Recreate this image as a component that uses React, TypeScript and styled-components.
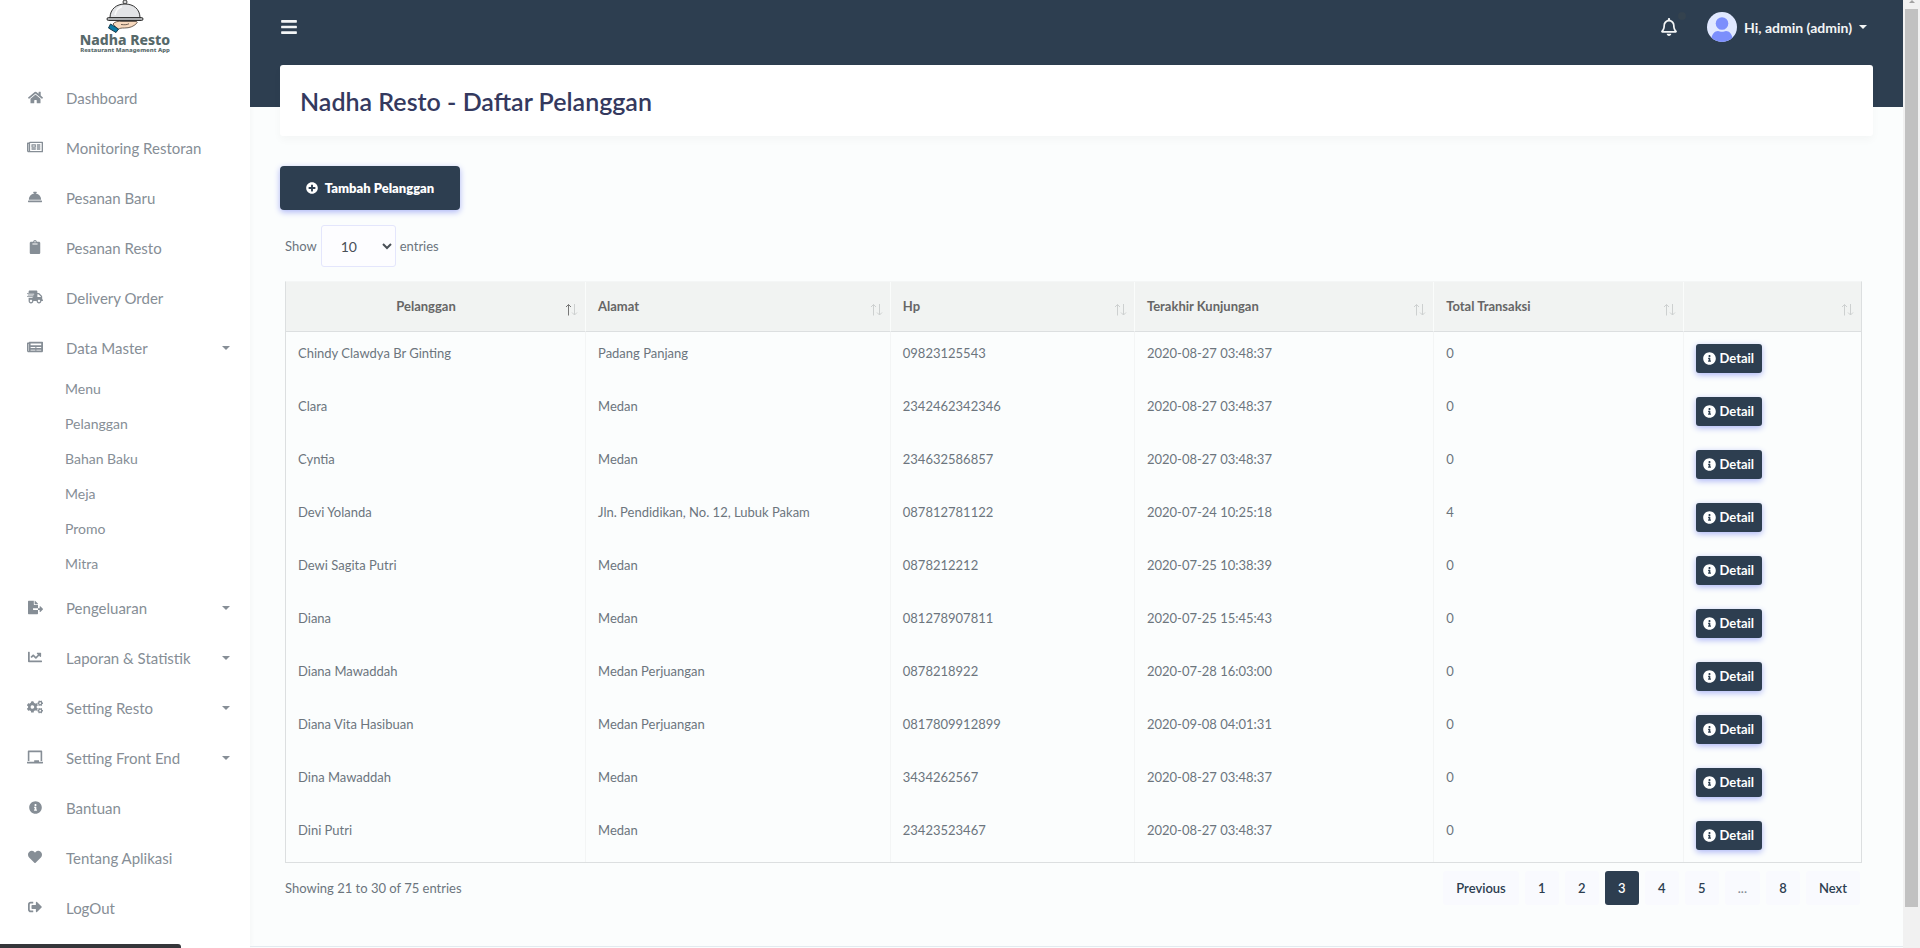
import React from "react";
import styled, { createGlobalStyle } from "styled-components";
import type { IconType } from "react-icons";
import {
  FaBars,
  FaChalkboard,
  FaChartLine,
  FaClipboard,
  FaCogs,
  FaConciergeBell,
  FaFileExport,
  FaHeart,
  FaHome,
  FaInfoCircle,
  FaNewspaper,
  FaPlusCircle,
  FaRegBell,
  FaRegNewspaper,
  FaShippingFast,
  FaSignOutAlt,
} from "react-icons/fa";

const navy = "#2d3e50";
const grey = "#868e96";

const GlobalStyle = createGlobalStyle`
  * { box-sizing: border-box; }
  body {
    margin: 0;
    background: #fbfdfd;
    color: #6c757d;
    font-family: Lato, "Open Sans", "Liberation Sans", sans-serif;
    font-size: 13px;
    line-height: 18px;
  }
  button, select { font-family: inherit; }
  a { color: inherit; text-decoration: none; }
`;

const Page = styled.div`
  display: grid;
  grid-template-columns: 250px minmax(0, 1fr) 17px;
  height: 100vh;
  overflow: hidden;
`;

/* Sidebar */
const Sidebar = styled.aside`
  background: #fff;
  box-shadow: 0 0 6px rgba(0, 0, 0, 0.04);
  overflow: hidden;
`;

const Brand = styled.a`
  display: flex;
  flex-direction: column;
  align-items: center;
  height: 73px;
  color: #57696a;
  font-family: "Noto Sans", "Open Sans", sans-serif;
  font-weight: 800;
`;

const BrandName = styled.span`
  font-size: 14px;
  line-height: 13px;
`;

const BrandTagline = styled.span`
  font-size: 6px;
  line-height: 8px;
`;

const Menu = styled.ul`
  margin: 0;
  padding: 0;
  list-style: none;
`;

const MenuLink = styled.a`
  display: flex;
  align-items: center;
  height: 50px;
  padding: 0 20px 0 25px;
  color: ${grey};
  font-size: 15px;
`;

const MenuIcon = styled.span`
  display: flex;
  justify-content: center;
  width: 20px;
  margin-right: 21px;
  padding-bottom: 2px;
`;

const MenuLabel = styled.span`
  flex: 1;
`;

const Caret = styled.span`
  border: 4px solid transparent;
  border-top-color: currentColor;
  border-bottom: 0;
`;

const SubMenu = styled(Menu)`
  padding: 0 0 0 65px;
`;

const SubLink = styled.a`
  display: flex;
  align-items: center;
  height: 35px;
  padding-bottom: 3px;
  color: ${grey};
  font-size: 14px;
`;

/* Main column */
const Main = styled.main`
  display: flex;
  flex-direction: column;
  min-width: 0;
`;

const Topbar = styled.header`
  display: flex;
  align-items: flex-start;
  height: 65px;
  padding: 12px 36px 0 30px;
  background: ${navy};
  color: #fff;
`;

const IconButton = styled.button`
  display: flex;
  align-items: center;
  height: 30px;
  padding: 0;
  border: 0;
  background: none;
  color: #f3f5f6;
`;

const BellButton = styled(IconButton)`
  position: relative;
  margin-left: auto;
`;

const BellDot = styled.span`
  position: absolute;
  top: 0;
  right: -8px;
  width: 8px;
  height: 8px;
  border-radius: 50%;
  background: #34424e;
`;

const UserButton = styled(IconButton)`
  gap: 7px;
  margin-left: 29px;
  font-size: 14px;
  font-weight: 700;
`;

const Content = styled.div`
  flex: 1;
  padding: 0 30px;
  background: linear-gradient(${navy} 42px, transparent 42px);
`;

const TitleCard = styled.section`
  padding: 24px 20px 22px;
  border-radius: 3px;
  background: #fff;
  box-shadow: 0 4px 8px rgba(0, 0, 0, 0.03);
`;

const Title = styled.h1`
  margin: 0;
  color: #34395e;
  font-size: 25px;
  font-weight: 600;
  line-height: 25px;
`;

const AddButton = styled.button`
  display: flex;
  align-items: center;
  justify-content: center;
  gap: 7px;
  width: 180px;
  height: 44px;
  margin-top: 30px;
  padding: 0;
  border: 0;
  border-radius: 4px;
  background: ${navy};
  box-shadow: 0 2px 6px #acb5f6;
  color: #fff;
  font-size: 13px;
  font-weight: 800;
`;

const ListArea = styled.section`
  padding: 15px 11px 0 5px;
`;

const LengthLabel = styled.label`
  display: flex;
  align-items: center;
  gap: 4px;
`;

const LengthSelect = styled.select`
  width: 75px;
  height: 42px;
  padding: 0 0 0 15px;
  border: 1px solid #e4e6fc;
  border-radius: 3px;
  background-color: #fdfdff;
  color: #495057;
  font-size: 14px;
`;

const Table = styled.table`
  width: 100%;
  margin-top: 14px;
  border: 1px solid #dcdfe0;
  border-top-color: #f4f6f6;
  border-spacing: 0;
  border-collapse: separate;
  table-layout: fixed;
`;

const Th = styled.th<{ $width: string; $center?: boolean }>`
  width: ${(p) => p.$width};
  height: 50px;
  padding: 0 7px 0 12px;
  border-bottom: 1px solid #dcdfe0;
  border-right: 1px solid #fafcfb;
  background: #f1f3f2;
  color: #666;
  font-weight: 700;
  text-align: ${(p) => (p.$center ? "center" : "left")};
  &:last-child { border-right: 0; }
`;

const ThInner = styled.div<{ $center?: boolean }>`
  display: flex;
  align-items: center;
  padding-bottom: 2px;
`;

const ThLabel = styled.span<{ $center?: boolean }>`
  flex: 1;
  padding-right: ${(p) => (p.$center ? "11px" : "0")};
`;

const SortSlot = styled.span`
  display: flex;
  padding-top: 8px;
`;

const Td = styled.td`
  height: 53px;
  padding: 12px 12px 0;
  border-right: 1px solid #f3f5f5;
  vertical-align: top;
  &:last-child { border-right: 0; }
`;

const DetailButton = styled.button`
  display: flex;
  align-items: center;
  justify-content: center;
  gap: 3px;
  width: 66px;
  height: 29px;
  padding: 0 0 1px;
  border: 0;
  border-radius: 3px;
  background: ${navy};
  box-shadow: 0 2px 6px #acb5f6;
  color: #fff;
  font-size: 13px;
  font-weight: 700;
`;

const TableFooter = styled.div`
  display: flex;
  justify-content: space-between;
  align-items: center;
  padding: 8px 2px 0 0;
`;

const Pagination = styled.nav`
  display: flex;
  gap: 6px;
`;

const PageButton = styled.button<{ $active?: boolean }>`
  min-width: 34px;
  height: 34px;
  padding: 0 13px;
  border: 0;
  border-radius: 3px;
  background: ${(p) => (p.$active ? navy : "#f9fafe")};
  color: ${(p) => (p.$active ? "#fff" : navy)};
  font-size: 13px;
  font-weight: 600;
  &:disabled { color: ${grey}; }
`;

const PageFooter = styled.footer`
  height: 2px;
  border-top: 1px solid #e3eaef;
`;

/* Page scrollbar */
const ScrollTrack = styled.div`
  display: flex;
  flex-direction: column;
  align-items: center;
  padding-bottom: 41px;
  background: #f1f1f1;
`;

const ScrollArrow = styled.span`
  height: 3px;
  margin-bottom: 6px;
  border: 3px solid transparent;
  border-top: 0;
  border-bottom-color: #a3a3a3;
`;

const ScrollThumb = styled.div`
  flex: 1;
  width: 13px;
  background: #c1c1c1;
`;

const StatusBubble = styled.div`
  position: fixed;
  left: 0;
  bottom: 0;
  width: 181px;
  height: 4px;
  border-top-right-radius: 3px;
  background: #35363a;
`;

type MenuEntry = { label: string; icon: IconType; size: number; caret?: boolean; children?: string[] };

const menu: MenuEntry[] = [
  { label: "Dashboard", icon: FaHome, size: 15 },
  { label: "Monitoring Restoran", icon: FaRegNewspaper, size: 16 },
  { label: "Pesanan Baru", icon: FaConciergeBell, size: 14 },
  { label: "Pesanan Resto", icon: FaClipboard, size: 14 },
  { label: "Delivery Order", icon: FaShippingFast, size: 16 },
  {
    label: "Data Master",
    icon: FaNewspaper,
    size: 16,
    caret: true,
    children: ["Menu", "Pelanggan", "Bahan Baku", "Meja", "Promo", "Mitra"],
  },
  { label: "Pengeluaran", icon: FaFileExport, size: 15, caret: true },
  { label: "Laporan & Statistik", icon: FaChartLine, size: 14, caret: true },
  { label: "Setting Resto", icon: FaCogs, size: 16, caret: true },
  { label: "Setting Front End", icon: FaChalkboard, size: 16, caret: true },
  { label: "Bantuan", icon: FaInfoCircle, size: 13 },
  { label: "Tentang Aplikasi", icon: FaHeart, size: 14 },
  { label: "LogOut", icon: FaSignOutAlt, size: 14 },
];

const columns = [
  { label: "Pelanggan", width: "19.05%" },
  { label: "Alamat", width: "19.35%" },
  { label: "Hp", width: "15.5%" },
  { label: "Terakhir Kunjungan", width: "19%" },
  { label: "Total Transaksi", width: "15.85%" },
  { label: "", width: "11.25%" },
];

const rows = [
  ["Chindy Clawdya Br Ginting", "Padang Panjang", "09823125543", "2020-08-27 03:48:37", "0"],
  ["Clara", "Medan", "2342462342346", "2020-08-27 03:48:37", "0"],
  ["Cyntia", "Medan", "234632586857", "2020-08-27 03:48:37", "0"],
  ["Devi Yolanda", "Jln. Pendidikan, No. 12, Lubuk Pakam", "087812781122", "2020-07-24 10:25:18", "4"],
  ["Dewi Sagita Putri", "Medan", "0878212212", "2020-07-25 10:38:39", "0"],
  ["Diana", "Medan", "081278907811", "2020-07-25 15:45:43", "0"],
  ["Diana Mawaddah", "Medan Perjuangan", "0878218922", "2020-07-28 16:03:00", "0"],
  ["Diana Vita Hasibuan", "Medan Perjuangan", "0817809912899", "2020-09-08 04:01:31", "0"],
  ["Dina Mawaddah", "Medan", "3434262567", "2020-08-27 03:48:37", "0"],
  ["Dini Putri", "Medan", "23423523467", "2020-08-27 03:48:37", "0"],
];

const pages = ["Previous", "1", "2", "3", "4", "5", "...", "8", "Next"];

function LogoMark() {
  return (
    <svg width="38" height="33" viewBox="0 0 38 33" aria-hidden="true">
      <circle cx="19" cy="2" r="2" fill="#d8d8d8" stroke="#3a3a3a" />
      <path d="M4 18C4 9 10.500 4 19 4s15 5 15 14z" fill="#e3e4e6" stroke="#333" />
      <path d="M9 15c1-5 4-7.500 7-8.500" fill="none" stroke="#fafafa" strokeWidth="1.500" />
      <rect x="1" y="17.500" width="36" height="3" rx="1.500" fill="#a9abad" stroke="#333" />
      <path
        d="M7 24c2-2.500 5-3 9-2.500h14c1.500 0 1.500 1.200.5 2-3 3-7 4.500-12 4.500-3 0-4.500 0-6.500 1.500z"
        fill="#f8d9bd"
        stroke="#4a3d35"
        strokeWidth=".8"
      />
      <path d="M15 24.500c4 .5 6 .3 8-.8" fill="none" stroke="#4a3d35" strokeWidth=".8" />
      <path d="M4.500 24l8 5-2.500 3.500L2.500 28z" fill="#0c7ba5" stroke="#153a4c" />
    </svg>
  );
}

function Avatar() {
  return (
    <svg width="30" height="30" viewBox="0 0 30 30" aria-hidden="true">
      <clipPath id="avatar-clip">
        <circle cx="15" cy="15" r="15" />
      </clipPath>
      <g clipPath="url(#avatar-clip)">
        <rect width="30" height="30" fill="#e0e8ff" />
        <circle cx="15" cy="11.500" r="6.300" fill="#7c8ffc" />
        <path d="M4 30c0-8 4-11 7-11 2 1 6 1 8 0 3 0 7 3 7 11z" fill="#7c8ffc" />
      </g>
    </svg>
  );
}

function SortIcon({ ascending }: { ascending?: boolean }) {
  return (
    <svg width="13" height="13" viewBox="0 0 13 13" fill="none" aria-hidden="true">
      <path d="M3.500 12.500V1.500M1 4l2.500-2.500L6 4" stroke={ascending ? "#777" : "#cdd0d0"} />
      <path d="M9.500 1v11M7 9.500l2.500 2.500L12 9.500" stroke="#cdd0d0" />
    </svg>
  );
}

export default function App() {
  return (
    <Page>
      <GlobalStyle />
      <Sidebar>
        <Brand href="#">
          <LogoMark />
          <BrandName>Nadha Resto</BrandName>
          <BrandTagline>Restaurant Management App</BrandTagline>
        </Brand>
        <Menu>
          {menu.map(({ label, icon: Icon, size, caret, children }) => (
            <li key={label}>
              <MenuLink href="#">
                <MenuIcon>
                  <Icon size={size} />
                </MenuIcon>
                <MenuLabel>{label}</MenuLabel>
                {caret && <Caret />}
              </MenuLink>
              {children && (
                <SubMenu>
                  {children.map((child) => (
                    <li key={child}>
                      <SubLink href="#">{child}</SubLink>
                    </li>
                  ))}
                </SubMenu>
              )}
            </li>
          ))}
        </Menu>
      </Sidebar>

      <Main>
        <Topbar>
          <IconButton aria-label="Toggle menu">
            <FaBars size={18} />
          </IconButton>
          <BellButton aria-label="Notifications">
            <FaRegBell size={18} />
            <BellDot />
          </BellButton>
          <UserButton>
            <Avatar />
            Hi, admin (admin)
            <Caret />
          </UserButton>
        </Topbar>

        <Content>
          <TitleCard>
            <Title>Nadha Resto - Daftar Pelanggan</Title>
          </TitleCard>
          <AddButton>
            <FaPlusCircle size={12} />
            Tambah Pelanggan
          </AddButton>

          <ListArea>
            <LengthLabel>
              Show
              <LengthSelect defaultValue="10">
                <option>10</option>
                <option>25</option>
                <option>50</option>
                <option>100</option>
              </LengthSelect>
              entries
            </LengthLabel>

            <Table>
              <thead>
                <tr>
                  {columns.map((column, i) => (
                    <Th key={column.label} $width={column.width} $center={i === 0}>
                      <ThInner>
                        <ThLabel $center={i === 0}>{column.label}</ThLabel>
                        <SortSlot>
                          <SortIcon ascending={i === 0} />
                        </SortSlot>
                      </ThInner>
                    </Th>
                  ))}
                </tr>
              </thead>
              <tbody>
                {rows.map((row) => (
                  <tr key={row[0]}>
                    {row.map((cell, i) => (
                      <Td key={i}>{cell}</Td>
                    ))}
                    <Td>
                      <DetailButton>
                        <FaInfoCircle size={13} />
                        Detail
                      </DetailButton>
                    </Td>
                  </tr>
                ))}
              </tbody>
            </Table>

            <TableFooter>
              <span>Showing 21 to 30 of 75 entries</span>
              <Pagination aria-label="Pagination">
                {pages.map((page) => (
                  <PageButton key={page} $active={page === "3"} disabled={page === "..."}>
                    {page}
                  </PageButton>
                ))}
              </Pagination>
            </TableFooter>
          </ListArea>
        </Content>
        <PageFooter />
      </Main>

      <ScrollTrack>
        <ScrollArrow />
        <ScrollThumb />
      </ScrollTrack>
      <StatusBubble />
    </Page>
  );
}
